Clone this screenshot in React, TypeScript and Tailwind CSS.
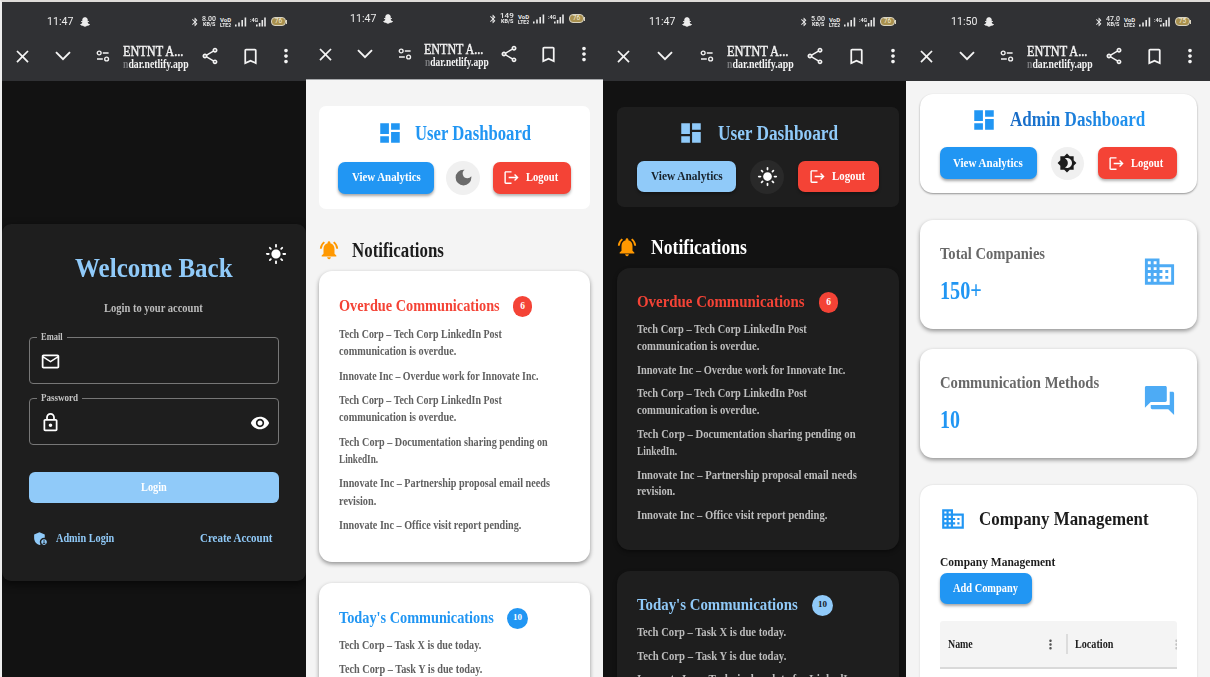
import { useLayoutEffect, useRef, type ReactNode } from "react";
import {
  MdAdminPanelSettings,
  MdBluetooth,
  MdBookmarkBorder,
  MdBrightness4,
  MdBusiness,
  MdClose,
  MdDarkMode,
  MdDashboard,
  MdForum,
  MdLightMode,
  MdLogout,
  MdMailOutline,
  MdMoreVert,
  MdNotificationsActive,
  MdOutlineLock,
  MdOutlineShare,
  MdVisibility,
} from "react-icons/md";
import { FaSnapchatGhost } from "react-icons/fa";

/* A single line of text, condensed or widened to the width of its box. */
function Line({ className, children }: { className: string; children: ReactNode }) {
  const box = useRef<HTMLSpanElement>(null);
  const text = useRef<HTMLSpanElement>(null);
  useLayoutEffect(() => {
    if (!box.current || !text.current) return;
    const natural = text.current.offsetWidth;
    const wanted = parseFloat(getComputedStyle(box.current).width);
    if (natural > 0) text.current.style.transform = `scaleX(${wanted / natural})`;
  }, [children]);
  return (
    <span ref={box} className={`block shrink-0 whitespace-nowrap ${className}`}>
      <span ref={text} className="inline-block w-max origin-left">
        {children}
      </span>
    </span>
  );
}

function Signal() {
  return (
    <svg viewBox="0 0 12 10" className="h-[10px] w-[12px] shrink-0" fill="#e8e8e8">
      <rect x="0" y="7.5" width="1.6" height="2" />
      <rect x="3.2" y="5.5" width="1.6" height="4" />
      <rect x="6.4" y="3" width="1.6" height="6.5" />
      <rect x="9.6" y="0.5" width="1.6" height="9" />
    </svg>
  );
}

function StatusBar({ time, speed, volte, second, battery, className }: { time: string; speed: string; volte: string; second: string; battery: string; className: string }) {
  return (
    <div className={`flex items-center font-['Roboto',sans-serif] text-[#ececec] ${className}`}>
      <Line className="w-[26px] text-[11px] leading-[14px]">{time}</Line>
      <FaSnapchatGhost className="ml-[7px] size-[10px]" />
      <div className="ml-auto flex items-center">
        <MdBluetooth className="mr-[2px] size-[10px]" />
        <div className="mr-[4px] flex w-[14px] flex-col items-center">
          <Line className="w-[14px] text-[7.5px] font-medium leading-[6px]">{speed}</Line>
          <Line className="w-[12px] text-[5px] font-bold leading-[5px]">KB/S</Line>
        </div>
        <div className="mr-[4px] flex w-[11px] flex-col">
          <Line className="w-[11px] text-[6px] font-bold leading-[5px]">{volte}</Line>
          <Line className="w-[11px] text-[6px] font-bold leading-[5px]">{second}</Line>
        </div>
        <Signal />
        <div className="ml-[3px] flex items-start">
          <Line className="w-[8px] text-[6px] font-bold leading-[6px]">:4G</Line>
          <svg viewBox="0 0 10 10" className="-ml-[2px] h-[10px] w-[10px]" fill="#e8e8e8">
            <rect x="0" y="7.5" width="1.6" height="2" />
            <rect x="2.8" y="6" width="1.6" height="3.5" />
            <rect x="5.5" y="3" width="1.6" height="6.5" />
            <rect x="8.2" y="0.5" width="1.6" height="9" />
          </svg>
        </div>
        <div className="ml-[5px] flex h-[9px] w-[15px] items-center justify-center rounded-[4px] border border-[#d8d3c2] bg-[#a8904e] text-[6.5px] leading-none text-[#f4edd8]">
          {battery}
        </div>
        <div className="h-[4px] w-px bg-[#d8d3c2]" />
      </div>
    </div>
  );
}

function Toolbar({ className, title, url }: { className: string; title: string; url: string }) {
  return (
    <div className={`grid h-[30px] items-center justify-items-center text-[#f4f4f4] ${className}`}>
      <MdClose className="size-[21px]" />
      <svg viewBox="0 0 16 10" className="h-[10px] w-[16px]" fill="none" stroke="currentColor" strokeWidth="1.9">
        <path d="M1 1.2L8 8.2L15 1.2" />
      </svg>
      <svg viewBox="0 0 14 12" className="h-[12px] w-[14px]" fill="none" stroke="currentColor" strokeWidth="1.4">
        <circle cx="3.2" cy="3" r="1.9" />
        <path d="M6.8 3H12.6M1 9H6.8" />
        <circle cx="10.6" cy="9" r="1.9" />
      </svg>
      <div className="flex flex-col justify-self-start pt-px">
        <Line className={`text-[14.5px] leading-[14px] [-webkit-text-stroke:0.45px_currentColor] ${title}`}>ENTNT A...</Line>
        <Line className={`text-[11.5px] font-bold leading-[12px] ${url}`}>
          <span className="text-[#77787b]">n</span>dar.netlify.app
        </Line>
      </div>
      <MdOutlineShare className="size-[20px]" />
      <MdBookmarkBorder className="size-[21px]" />
      <MdMoreVert className="size-[22px]" />
    </div>
  );
}

function ActionRow({ view, viewText, toggle, icon, logout, logoutText, className }: { view: string; viewText: string; toggle: string; icon: ReactNode; logout: string; logoutText: string; className: string }) {
  return (
    <div className={`flex items-center text-[11.5px] font-bold ${className}`}>
      <button className={`flex shrink-0 items-center justify-center rounded-[7px] pb-px shadow-[0_2px_3px_rgba(0,0,0,0.35)] ${view}`}>
        <Line className={`text-left leading-[14px] ${viewText}`}>View Analytics</Line>
      </button>
      <button className={`flex shrink-0 items-center justify-center rounded-full ${toggle}`}>{icon}</button>
      <button className={`flex shrink-0 items-center rounded-[7px] bg-[#f44336] pl-[10px] text-white shadow-[0_2px_3px_rgba(0,0,0,0.3)] ${logout}`}>
        <MdLogout className="mr-[6px] size-[17px] shrink-0" />
        <Line className={`pb-px text-left leading-[14px] ${logoutText}`}>Logout</Line>
      </button>
    </div>
  );
}

type Row = [string, string];

function MessageList({ items, line, gap }: { items: Row[][]; line: string; gap: string }) {
  return (
    <ul className={`flex flex-col ${gap}`}>
      {items.map((rows, i) => (
        <li key={i}>
          {rows.map(([text, width]) => (
            <Line key={text} className={`${line} ${width}`}>{text}</Line>
          ))}
        </li>
      ))}
    </ul>
  );
}

const POST = "Tech Corp – Tech Corp LinkedIn Post";
const COMM = "communication is overdue.";
const WORK = "Innovate Inc – Overdue work for Innovate Inc.";
const DOCS = "Tech Corp – Documentation sharing pending on";
const PARTNER = "Innovate Inc – Partnership proposal email needs";
const OFFICE = "Innovate Inc – Office visit report pending.";
const TASK_X = "Tech Corp – Task X is due today.";
const TASK_Y = "Tech Corp – Task Y is due today.";
const UPDATE = "Innovate Inc – Technical update for LinkedIn";

const lightOverdue: Row[][] = [
  [[POST, "w-[163px]"], [COMM, "w-[117px]"]],
  [[WORK, "w-[199px]"]],
  [[POST, "w-[163px]"], [COMM, "w-[117px]"]],
  [[DOCS, "w-[209px]"], ["LinkedIn.", "w-[39px]"]],
  [[PARTNER, "w-[211px]"], ["revision.", "w-[37px]"]],
  [[OFFICE, "w-[182px]"]],
];
const lightToday: Row[][] = [[[TASK_X, "w-[142px]"]], [[TASK_Y, "w-[143px]"]]];

const darkOverdue: Row[][] = [
  [[POST, "w-[170px]"], [COMM, "w-[122px]"]],
  [[WORK, "w-[208px]"]],
  [[POST, "w-[170px]"], [COMM, "w-[122px]"]],
  [[DOCS, "w-[219px]"], ["LinkedIn.", "w-[40px]"]],
  [[PARTNER, "w-[220px]"], ["revision.", "w-[38px]"]],
  [[OFFICE, "w-[190px]"]],
];
const darkToday: Row[][] = [[[TASK_X, "w-[149px]"]], [[TASK_Y, "w-[149px]"]], [[UPDATE, "w-[217px]"]]];

function LoginPhone() {
  return (
    <section className="flex h-[675px] w-[304px] shrink-0 flex-col bg-[#121212]">
      <header className="h-[79px] shrink-0 bg-[#303134] pt-[12px]">
        <StatusBar className="h-[15px] pl-[45px] pr-[19px]" time="11:47" speed="8.00" volte="VoD" second="LTE2" battery="76" />
        <Toolbar className="mt-[12px] grid-cols-[40px_41px_40px_67px_40px_40px_32px]" title="w-[60px]" url="w-[66px]" />
      </header>
      <div className="mt-[143px] flex h-[357px] flex-col rounded-[9px] bg-[#1e1e1e] px-[27px] shadow-[0_3px_8px_rgba(0,0,0,0.6)]">
        <div className="-mr-[8px] flex h-[60px] items-start">
          <Line className="ml-[46px] mt-[27px] w-[158px] text-[28px] font-bold leading-[34px] text-[#90caf9]">Welcome Back</Line>
          <MdLightMode className="ml-auto mt-[19px] size-[22px] text-white" />
        </div>
        <Line className="ml-[75px] mt-[17px] w-[99px] text-[12px] font-bold leading-[14px] text-[#bcbcbc]">Login to your account</Line>
        <fieldset className="mt-[15px] flex h-[54px] items-center rounded-[4px] border border-[#777777] pl-[10px] pt-[7px]">
          <legend className="-ml-[3px] h-[14px] px-[4px] text-[10px] font-bold text-[#c4c4c4]">
            <Line className="w-[22px] leading-[14px]">Email</Line>
          </legend>
          <MdMailOutline className="size-[21px] text-white" />
        </fieldset>
        <fieldset className="mt-[7px] flex h-[54px] items-center justify-between rounded-[4px] border border-[#777777] pl-[10px] pr-[8px] pt-[7px]">
          <legend className="-ml-[3px] h-[14px] px-[4px] text-[10px] font-bold text-[#c4c4c4]">
            <Line className="w-[37px] leading-[13px]">Password</Line>
          </legend>
          <MdOutlineLock className="size-[21px] text-white" />
          <MdVisibility className="size-[20px] text-white" />
        </fieldset>
        <button className="mt-[27px] flex h-[31px] items-center justify-center rounded-[6px] bg-[#90caf9] pb-px pr-px text-[11.5px] font-bold text-white">
          <Line className="w-[26px] text-left leading-[14px]">Login</Line>
        </button>
        <div className="mt-[27px] flex h-[16px] items-center pl-[3px] pr-[7px] text-[12px] font-bold leading-[14px] text-[#90caf9]">
          <MdAdminPanelSettings className="mt-px size-[17px]" />
          <Line className="ml-[7px] w-[58px]">Admin Login</Line>
          <Line className="ml-auto w-[72px]">Create Account</Line>
        </div>
      </div>
    </section>
  );
}

function LightPhone() {
  return (
    <section className="flex h-[675px] w-[297px] shrink-0 flex-col overflow-hidden bg-[#f4f4f4]">
      <header className="h-[78px] shrink-0 border-b border-[#a5a7aa] bg-[#303134] pt-[9px]">
        <StatusBar className="h-[15px] pl-[44px] pr-[18px]" time="11:47" speed="149" volte="VoD" second="LTE2" battery="76" />
        <Toolbar className="mt-[13px] grid-cols-[39px_40px_40px_66px_36px_43px_28px]" title="-ml-px w-[59px]" url="w-[64px]" />
      </header>
      <div className="ml-[13px] mt-[26px] h-[103px] w-[271px] shrink-0 rounded-[7px] bg-white">
        <div className="flex h-[53px] items-center pl-[58px] text-[#2196f3]">
          <MdDashboard className="size-[26px]" />
          <Line className="ml-[12px] w-[116px] text-[20px] font-bold leading-[26px]">User Dashboard</Line>
        </div>
        <ActionRow
          className="h-[37px] pl-[19px]"
          view="h-[32px] w-[96px] bg-[#2196f3] text-white"
          viewText="w-[69px]"
          toggle="ml-[12px] size-[34px] bg-[#f0f0f0] text-[#6b6b6b]"
          icon={<MdDarkMode className="size-[21px]" />}
          logout="ml-[13px] h-[32px] w-[78px]"
          logoutText="w-[32px]"
        />
      </div>
      <div className="ml-[12px] mt-[29px] flex h-[24px] shrink-0 items-center">
        <MdNotificationsActive className="size-[22px] text-[#ff9800]" />
        <Line className="ml-[12px] w-[92px] text-[20px] font-bold leading-[24px] text-[#1c1c1c]">Notifications</Line>
      </div>
      <div className="ml-[13px] mt-[9px] h-[291px] w-[271px] shrink-0 rounded-[13px] bg-white pl-[20px] shadow-[0_2px_4px_rgba(0,0,0,0.4)]">
        <div className="flex h-[55px] items-center pt-[15px]">
          <Line className="w-[161px] text-[16.5px] font-bold leading-[20px] text-[#f44336]">Overdue Communications</Line>
          <span className="ml-[13px] flex h-[21px] w-[19px] items-center justify-center rounded-full bg-[#f44336] text-[9.5px] font-bold text-white">6</span>
        </div>
        <MessageList items={lightOverdue} line="text-[12.5px] font-bold leading-[17.4px] text-[#606060]" gap="gap-[6.9px]" />
      </div>
      <div className="ml-[13px] mt-[21px] h-[130px] w-[271px] shrink-0 rounded-[13px] bg-white pl-[20px] shadow-[0_2px_4px_rgba(0,0,0,0.4)]">
        <div className="flex h-[54px] items-center pt-[16px]">
          <Line className="w-[155px] text-[16.5px] font-bold leading-[20px] text-[#2196f3]">Today's Communications</Line>
          <span className="ml-[13px] flex size-[21px] items-center justify-center rounded-full bg-[#2196f3] text-[9px] font-bold text-white">10</span>
        </div>
        <MessageList items={lightToday} line="text-[12.5px] font-bold leading-[17.4px] text-[#606060]" gap="gap-[6.9px]" />
      </div>
    </section>
  );
}

function DarkPhone() {
  return (
    <section className="flex h-[675px] w-[303px] shrink-0 flex-col overflow-hidden bg-[#121212]">
      <header className="h-[79px] shrink-0 bg-[#303134] pt-[12px]">
        <StatusBar className="h-[15px] pl-[46px] pr-[10px]" time="11:47" speed="5.00" volte="VoD" second="LTE2" battery="76" />
        <Toolbar className="mt-[12px] grid-cols-[41px_42px_41px_68px_40px_42px_32px]" title="w-[61px]" url="w-[67px]" />
      </header>
      <div className="ml-[14px] mt-[26px] h-[100px] w-[282px] shrink-0 rounded-[7px] bg-[#1e1e1e]">
        <div className="flex h-[52px] items-center pl-[61px] text-[#90caf9]">
          <MdDashboard className="size-[26px]" />
          <Line className="ml-[14px] w-[120px] text-[20px] font-bold leading-[26px]">User Dashboard</Line>
        </div>
        <ActionRow
          className="h-[35px] pl-[20px]"
          view="h-[31px] w-[99px] bg-[#90caf9] text-[#17212b]"
          viewText="w-[72px]"
          toggle="ml-[14px] size-[34px] bg-[#292929] text-white"
          icon={<MdLightMode className="size-[21px]" />}
          logout="ml-[14px] h-[31px] w-[81px] pl-[11px]"
          logoutText="w-[33px]"
        />
      </div>
      <div className="ml-[13px] mt-[28px] flex h-[24px] shrink-0 items-center">
        <MdNotificationsActive className="size-[22px] text-[#ff9800]" />
        <Line className="ml-[13px] w-[96px] text-[20px] font-bold leading-[24px] text-white">Notifications</Line>
      </div>
      <div className="ml-[14px] mt-[9px] h-[282px] w-[282px] shrink-0 rounded-[13px] bg-[#1e1e1e] pl-[20px] shadow-[0_2px_4px_rgba(0,0,0,0.4)]">
        <div className="flex h-[53px] items-center pt-[14px]">
          <Line className="w-[168px] text-[16.5px] font-bold leading-[20px] text-[#f44336]">Overdue Communications</Line>
          <span className="ml-[14px] mt-px flex h-[21px] w-[19px] items-center justify-center rounded-full bg-[#f44336] text-[9.5px] font-bold text-white">6</span>
        </div>
        <MessageList items={darkOverdue} line="text-[12.5px] font-bold leading-[16.9px] text-[#bcbcbc]" gap="gap-[6.8px]" />
      </div>
      <div className="ml-[14px] mt-[21px] h-[130px] w-[282px] shrink-0 rounded-[13px] bg-[#1e1e1e] pl-[20px] shadow-[0_2px_4px_rgba(0,0,0,0.4)]">
        <div className="flex h-[53px] items-center pt-[14px]">
          <Line className="w-[161px] text-[16.5px] font-bold leading-[20px] text-[#90caf9]">Today's Communications</Line>
          <span className="ml-[14px] mt-px flex size-[21px] items-center justify-center rounded-full bg-[#90caf9] text-[9px] font-bold text-[#17212b]">10</span>
        </div>
        <MessageList items={darkToday} line="text-[12.5px] font-bold leading-[16.9px] text-[#bcbcbc]" gap="gap-[6.8px]" />
      </div>
    </section>
  );
}

function StatCard({ label, labelWidth, value, valueWidth, icon, className }: { label: string; labelWidth: string; value: string; valueWidth: string; icon: ReactNode; className: string }) {
  return (
    <div className={`ml-[13.5px] flex h-[109px] w-[277px] shrink-0 items-start justify-between rounded-[13px] bg-white pl-[20px] pr-[20px] shadow-[0_2px_4px_rgba(0,0,0,0.4)] ${className}`}>
      <div className="pt-[24px]">
        <Line className={`text-[16.5px] font-bold leading-[20px] text-[#686868] ${labelWidth}`}>{label}</Line>
        <Line className={`mt-[12px] text-[26px] font-bold leading-[30px] text-[#2196f3] ${valueWidth}`}>{value}</Line>
      </div>
      <div className="mt-[34px] text-[#4dabf5]">{icon}</div>
    </div>
  );
}

function AdminPhone() {
  return (
    <section className="flex h-[675px] w-[304px] shrink-0 flex-col overflow-hidden bg-[#f4f4f4]">
      <header className="h-[79px] shrink-0 bg-[#303134] pt-[12px]">
        <StatusBar className="h-[15px] pl-[45px] pr-[19px]" time="11:50" speed="47.0" volte="VoD" second="LTE2" battery="75" />
        <Toolbar className="mt-[12px] grid-cols-[40px_41px_40px_67px_40px_40px_32px]" title="w-[60px]" url="w-[66px]" />
      </header>
      <div className="ml-[13.5px] mt-[13px] h-[99px] w-[277px] shrink-0 rounded-[13px] bg-white shadow-[0_1px_2px_rgba(0,0,0,0.4)]">
        <div className="flex h-[51px] items-center pl-[51px]">
          <MdDashboard className="size-[26px] text-[#2196f3]" />
          <Line className="-mt-px ml-[13px] w-[135px] text-[20px] font-bold leading-[26px] [&>span]:bg-linear-to-r [&>span]:from-[#1769c4] [&>span]:to-[#2196f3] [&>span]:bg-clip-text [&>span]:text-transparent">
            Admin Dashboard
          </Line>
        </div>
        <ActionRow
          className="h-[36px] pl-[20px]"
          view="h-[32px] w-[97px] bg-[#2196f3] text-white"
          viewText="w-[70px]"
          toggle="ml-[14px] size-[33px] bg-[#f0f0f0] text-[#1c1c1c]"
          icon={<MdBrightness4 className="size-[20px]" />}
          logout="ml-[14px] h-[32px] w-[79px]"
          logoutText="w-[32px]"
        />
      </div>
      <StatCard className="mt-[27px]" label="Total Companies" labelWidth="w-[105px]" value="150+" valueWidth="w-[42px]" icon={<MdBusiness className="size-[35px]" />} />
      <StatCard className="mt-[20px]" label="Communication Methods" labelWidth="w-[159px]" value="10" valueWidth="w-[20px]" icon={<MdForum className="size-[35px]" />} />
      <div className="ml-[13.5px] mt-[27px] flex h-[200px] w-[277px] shrink-0 flex-col rounded-t-[13px] bg-white px-[20px] pt-[20px] shadow-[0_0_2px_rgba(0,0,0,0.15)]">
        <div className="flex h-[27px] items-center">
          <MdBusiness className="size-[26px] text-[#2196f3]" />
          <Line className="ml-[13px] w-[170px] text-[19px] font-bold leading-[24px] text-[#1c1c1c]">Company Management</Line>
        </div>
        <Line className="mt-[22px] w-[115px] text-[13px] font-bold leading-[16px] text-[#1c1c1c]">Company Management</Line>
        <button className="mt-[3px] flex h-[31px] w-[92px] shrink-0 items-center justify-center rounded-[7px] bg-[#2196f3] pb-[2px] text-[11.5px] font-bold text-white shadow-[0_2px_3px_rgba(0,0,0,0.35)]">
          <Line className="w-[65px] text-left leading-[14px]">Add Company</Line>
        </button>
        <div className="mt-[17px] flex h-[48px] w-[237px] shrink-0 items-center overflow-hidden rounded-t-[3px] border-b-2 border-[#d9d9d9] bg-[#f4f4f4] pl-[8px] text-[11.5px] font-bold text-[#1c1c1c]">
          <Line className="w-[25px] pb-px leading-[14px]">Name</Line>
          <MdMoreVert className="ml-[70px] size-[15px] shrink-0 text-[#555555]" />
          <div className="ml-[8px] h-[20px] w-[2px] shrink-0 bg-[#dcdcdc]" />
          <Line className="ml-[7px] w-[38px] pb-px leading-[14px]">Location</Line>
          <MdMoreVert className="ml-[56px] size-[15px] shrink-0 text-[#c4c4c4]" />
        </div>
      </div>
    </section>
  );
}

export default function App() {
  return (
    <main className="flex h-[677px] w-[1210px] overflow-hidden border-l-2 border-t-2 border-l-[#eeeeee] border-t-[#dedcd9] bg-[#f4f4f4] font-['Liberation_Serif',serif]">
      <LoginPhone />
      <LightPhone />
      <DarkPhone />
      <AdminPhone />
    </main>
  );
}
